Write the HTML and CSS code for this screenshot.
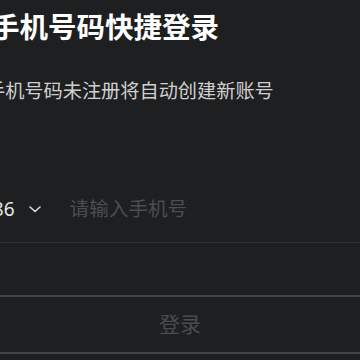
FILE: index.html
```html
<!DOCTYPE html>
<html lang="zh-CN">
<head>
    <meta charset="UTF-8">
    <meta name="viewport" content="width=device-width, initial-scale=1.0">
    <title>手机号码快捷登录</title>
    <link rel="stylesheet" href="styles.css">
</head>
<body>
    <div class="login">
        <h1 class="title">手机号码快捷登录</h1>
        <p class="hint">手机号码未注册将自动创建新账号</p>

        <div class="phone-row">
            <div class="area">
                <span class="code">+86</span>
                <svg class="arrow" width="12" height="7" viewBox="0 0 12 7">
                    <path d="M1 1 L6 5.5 L11 1" fill="none" stroke="#d8d8d8" stroke-width="1.6" stroke-linecap="round" stroke-linejoin="round"/>
                </svg>
            </div>
            <input class="phone" type="tel" placeholder="请输入手机号">
        </div>

        <button class="submit" disabled>登录</button>
    </div>
</body>
</html>
```

FILE: styles.css
```css
* {
    margin: 0;
    padding: 0;
    box-sizing: border-box;
}
body {
    background-color: #1e1f21;
    font-family: "Noto Sans", "Noto Sans CJK SC", sans-serif;
    overflow: hidden;
    height: 360px;
}
.login {
    display: flex;
    flex-direction: column;
}
.title {
    margin: 9px 0 0 -9px;
    font-size: 28.5px;
    line-height: 36px;
    font-weight: 700;
    color: #ffffff;
    white-space: nowrap;
}
.hint {
    margin: 33px 0 0 -14px;
    font-size: 19.2px;
    line-height: 26px;
    color: #d0d0d0;
    white-space: nowrap;
}
.phone-row {
    display: flex;
    align-items: center;
    margin-top: 92px;
    padding-bottom: 20px;
    border-bottom: 1px solid #303133;
}
.area {
    display: flex;
    align-items: center;
    gap: 14px;
    margin-left: -18px;
}
.code {
    font-size: 19px;
    line-height: 26px;
    color: #e6e6e6;
}
.phone {
    margin-left: 29px;
    flex: 1;
    min-width: 0;
    background: transparent;
    border: none;
    outline: none;
    font-family: inherit;
    font-size: 19.6px;
    line-height: 26px;
    height: 26px;
    color: #e6e6e6;
}
.phone::placeholder {
    color: #4c4d50;
}
.submit {
    margin: 52px -40px 0;
    height: 59px;
    padding-bottom: 3px;
    border: 2px solid #434447;
    border-radius: 30px;
    background: transparent;
    font-family: inherit;
    font-size: 21px;
    color: #4a4b4e;
}
```
